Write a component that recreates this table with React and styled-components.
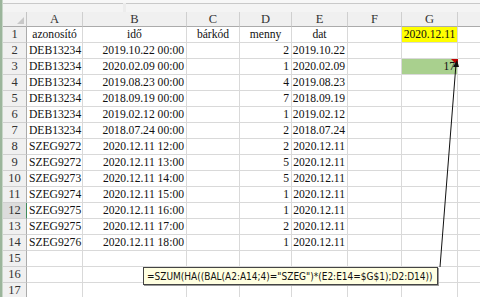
import React from 'react';
import styled, { createGlobalStyle } from 'styled-components';

const GlobalStyle = createGlobalStyle`
	body {
		margin: 0;
		background: #ffffff;
		overflow: hidden;
	}
`;

const Window = styled.div`
	position: relative;
	width: 480px;
	height: 297px;
	overflow: hidden;
	display: flex;
	background: #ffffff;
`;

const EdgeStrip = styled.div`
	width: 3px;
	flex: none;
	background: #9bb59b;
	border-right: 1px solid #c8d6c8;
	box-sizing: border-box;
`;

const Main = styled.div`
	flex: none;
	display: flex;
	flex-direction: column;
`;

const FormulaStrip = styled.div`
	height: 12px;
	flex: none;
	display: flex;
	gap: 3px;
	background: #ececec;
	border-top: 3px solid #f7f7f7;
	box-sizing: border-box;
`;

const FormulaPart = styled.div`
	flex: ${(p) => p.$grow || 'none'};
	width: ${(p) => p.$width || 'auto'};
	border-top: 1px solid #c9c9c9;
	background: #f4f4f4;
`;

const Sheet = styled.div`
	display: grid;
	grid-template-columns: 24px 56px 104px 53px 52px 56px 54px 56px 56px;
	grid-template-rows: 15px;
	grid-auto-rows: 16px;
	font-family: "Liberation Serif", "Times New Roman", serif;
	font-size: 11.6px;
	color: #111;
`;

const Corner = styled.div`
	position: relative;
	background: #f0f0f0;
	border-right: 1px solid #c4c4c4;
	border-bottom: 1px solid #ababab;
	&::after {
		content: '';
		position: absolute;
		right: 2px;
		bottom: 2px;
		border-left: 7px solid transparent;
		border-bottom: 7px solid #c8c8c8;
	}
`;

const ColHead = styled.div`
	display: flex;
	align-items: center;
	justify-content: center;
	background: #f0f0f0;
	border-right: 1px solid #cfcfcf;
	border-bottom: 1px solid #ababab;
	color: #333;
	font-size: 12.5px;
	box-sizing: border-box;
`;

const RowHead = styled.div`
	display: flex;
	align-items: center;
	justify-content: center;
	background: ${(p) => (p.$active ? '#dcdcdc' : '#f0f0f0')};
	border-right: 1px solid ${(p) => (p.$active ? '#3f8a5a' : '#ababab')};
	border-bottom: 1px solid #d0d0d0;
	color: #333;
	font-size: 12.5px;
	box-sizing: border-box;
`;

const Cell = styled.div`
	display: flex;
	align-items: center;
	justify-content: ${(p) =>
		p.$align === 'right' ? 'flex-end' : p.$align === 'center' ? 'center' : 'flex-start'};
	padding: 0 2px;
	background: ${(p) => p.$fill || '#ffffff'};
	border-right: 1px solid #d9d9d9;
	border-bottom: 1px solid #d9d9d9;
	white-space: nowrap;
	overflow: hidden;
	box-sizing: border-box;
`;

const CommentBox = styled.div`
	position: absolute;
	left: 143px;
	top: 267px;
	width: 295px;
	height: 18px;
	display: flex;
	align-items: center;
	padding: 0 3px;
	box-sizing: border-box;
	background: #ffffe1;
	border: 1px solid #444;
	box-shadow: 1px 1px 0 #9a9a9a;
	font-family: "DejaVu Sans Condensed", "DejaVu Sans", sans-serif;
	font-size: 10px;
	color: #111;
	white-space: nowrap;
`;

const Overlay = styled.svg`
	position: absolute;
	left: 0;
	top: 0;
	pointer-events: none;
`;

// the H column is only partly on screen, its letter falls outside the window
const columns = ['A', 'B', 'C', 'D', 'E', 'F', 'G', ''];

const records = [
	['DEB13234', '2019.10.22 00:00', 2, '2019.10.22'],
	['DEB13234', '2020.02.09 00:00', 1, '2020.02.09'],
	['DEB13234', '2019.08.23 00:00', 4, '2019.08.23'],
	['DEB13234', '2018.09.19 00:00', 7, '2018.09.19'],
	['DEB13234', '2019.02.12 00:00', 1, '2019.02.12'],
	['DEB13234', '2018.07.24 00:00', 2, '2018.07.24'],
	['SZEG9272', '2020.12.11 12:00', 2, '2020.12.11'],
	['SZEG9272', '2020.12.11 13:00', 5, '2020.12.11'],
	['SZEG9273', '2020.12.11 14:00', 5, '2020.12.11'],
	['SZEG9274', '2020.12.11 15:00', 1, '2020.12.11'],
	['SZEG9275', '2020.12.11 16:00', 1, '2020.12.11'],
	['SZEG9275', '2020.12.11 17:00', 2, '2020.12.11'],
	['SZEG9276', '2020.12.11 18:00', 1, '2020.12.11'],
];

const dateKey = '2020.12.11';
const total = records
	.filter((r) => r[0].slice(0, 4) === 'SZEG' && r[3] === dateKey)
	.reduce((s, r) => s + r[2], 0);

// build every row as a list of cells (A..H)
const buildRows = () => {
	const rows = [];
	rows.push([
		{ v: 'azonosító', a: 'center' },
		{ v: 'idő', a: 'center' },
		{ v: 'bárkód', a: 'center' },
		{ v: 'menny', a: 'center' },
		{ v: 'dat', a: 'center' },
		{},
		{ v: dateKey, a: 'center', fill: '#ffff00' },
		{},
	]);
	records.forEach((r, i) => {
		rows.push([
			{ v: r[0] },
			{ v: r[1], a: 'right' },
			{},
			{ v: r[2], a: 'right' },
			{ v: r[3], a: 'right' },
			{},
			i === 1 ? { v: total, a: 'right', fill: '#a9d08e' } : {},
			{},
		]);
	});
	for (let i = 0; i < 3; i++) rows.push(columns.map(() => ({})));
	return rows;
};

export default function App() {
	const rows = buildRows();
	return (
		<Window>
			<GlobalStyle />
			<EdgeStrip />
			<Main>
				<FormulaStrip>
					<FormulaPart $width="120px" />
					<FormulaPart $grow="1" />
				</FormulaStrip>
				<Sheet>
					<Corner />
					{columns.map((c, i) => (
						<ColHead key={i}>{c}</ColHead>
					))}
					{rows.map((row, ri) => (
						<React.Fragment key={ri}>
							<RowHead $active={ri === 11}>{ri + 1}</RowHead>
							{row.map((cell, ci) => (
								<Cell key={ci} $align={cell.a} $fill={cell.fill}>
									{cell.v}
								</Cell>
							))}
						</React.Fragment>
					))}
				</Sheet>
			</Main>
			<Overlay width="480" height="297">
				<polygon points="451,59 458,59 458,66" fill="#c00000" />
				<line x1="440" y1="267" x2="456" y2="64" stroke="#111" strokeWidth="1" />
				<polygon points="457,60 453,67 459,67" fill="#111" />
			</Overlay>
			<CommentBox>=SZUM(HA((BAL(A2:A14;4)="SZEG")*(E2:E14=$G$1);D2:D14))</CommentBox>
		</Window>
	);
}
